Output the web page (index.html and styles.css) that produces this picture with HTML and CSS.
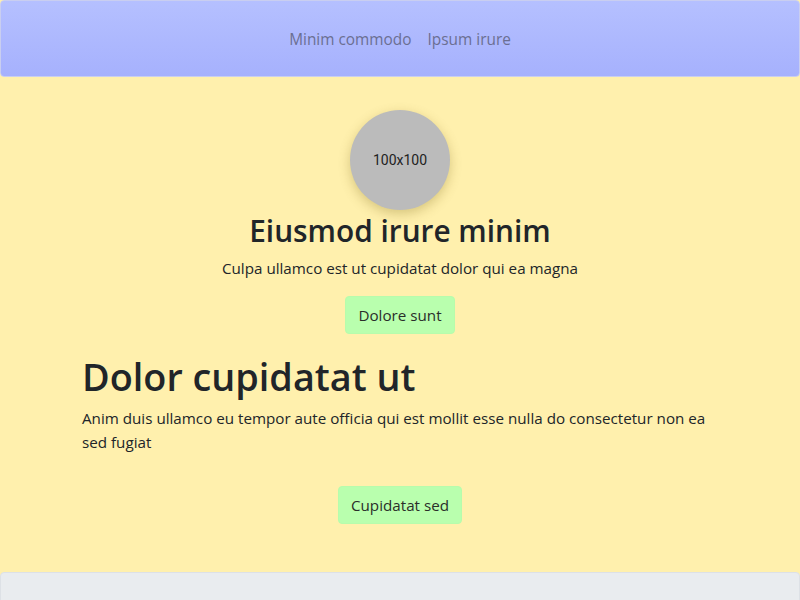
FILE: index.html
```html
<!DOCTYPE html>
<html>
<head>
<meta charset="utf-8">
<link rel="stylesheet" href="styles.css">
</head>
<body>
<nav class="navbar">
  <a class="nav-link" href="#">Minim commodo</a>
  <a class="nav-link" href="#">Ipsum irure</a>
</nav>
<main class="hero">
  <div class="avatar">100x100</div>
  <h2 class="title">Eiusmod irure minim</h2>
  <p class="subtitle">Culpa ullamco est ut cupidatat dolor qui ea magna</p>
  <button class="btn">Dolore sunt</button>
  <section class="content">
    <h1 class="big">Dolor cupidatat ut</h1>
    <p class="text">Anim duis ullamco eu tempor aute officia qui est mollit esse nulla do consectetur non ea sed fugiat</p>
    <div class="center"><button class="btn btn-lower">Cupidatat sed</button></div>
  </section>
</main>
<footer class="footer"></footer>
</body>
</html>
```
FILE: styles.css
```css
* { box-sizing: border-box; }
html, body { margin: 0; padding: 0; }
body {
  font-family: "Open Sans", "Noto Sans", sans-serif;
  color: #212529;
  background: #fff0ad;
  font-size: 15.2px;
  line-height: 24px;
}
.navbar {
  height: 77px;
  border: 1px solid #c9cef0;
  border-radius: 4px;
  background: linear-gradient(#b5c0ff, #a6b1fd);
  display: flex;
  justify-content: center;
  align-items: center;
  padding-top: 3px;
}
.nav-link {
  color: #6b6f92;
  text-decoration: none;
  padding: 0 8px;
  font-size: 15.4px;
  line-height: 24px;
}
.hero {
  display: flex;
  flex-direction: column;
  align-items: center;
  padding-top: 33px;
  padding-bottom: 48px;
}
.avatar {
  width: 100px;
  height: 100px;
  border-radius: 50%;
  background: #bbbbbb;
  box-shadow: 0 4px 12px rgba(120, 100, 20, 0.3);
  display: flex;
  align-items: center;
  justify-content: center;
  font-family: "Roboto", "Liberation Sans", sans-serif;
  font-size: 14px;
  color: #222;
}
.title {
  margin: 2px 0 0;
  font-size: 29.8px;
  line-height: 38px;
  font-weight: 600;
}
.subtitle {
  margin: 6px 0 0;
}
.btn {
  margin-top: 16px;
  height: 38px;
  padding: 0 12px;
  background: #b9ffae;
  border: 1px solid #b7fcac;
  border-radius: 4px;
  font-family: inherit;
  font-size: 15.2px;
  color: #2a2e2a;
}
.content {
  width: 636px;
  margin-top: 19px;
}
.big {
  margin: 0;
  font-size: 37.8px;
  line-height: 48px;
  font-weight: 600;
}
.text {
  margin: 5px 0 0;
}
.center {
  display: flex;
  justify-content: center;
}
.btn-lower {
  margin-top: 32px;
}
.footer {
  height: 40px;
  background: #e9ecef;
  border: 1px solid #dde1e6;
  border-radius: 4px 4px 0 0;
}
```
